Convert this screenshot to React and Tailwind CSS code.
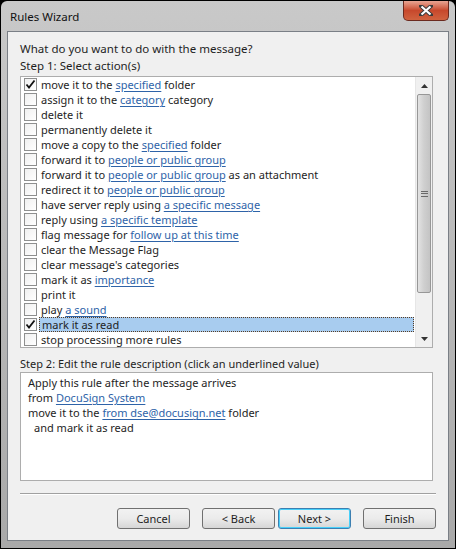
import React from "react";

const actions = [
  { checked: true, parts: ["move it to the ", { link: "specified" }, " folder"] },
  { parts: ["assign it to the ", { link: "category" }, " category"] },
  { parts: ["delete it"] },
  { parts: ["permanently delete it"] },
  { parts: ["move a copy to the ", { link: "specified" }, " folder"] },
  { parts: ["forward it to ", { link: "people or public group" }] },
  { parts: ["forward it to ", { link: "people or public group" }, " as an attachment"] },
  { parts: ["redirect it to ", { link: "people or public group" }] },
  { parts: ["have server reply using ", { link: "a specific message" }] },
  { parts: ["reply using ", { link: "a specific template" }] },
  { parts: ["flag message for ", { link: "follow up at this time" }] },
  { parts: ["clear the Message Flag"] },
  { parts: ["clear message's categories"] },
  { parts: ["mark it as ", { link: "importance" }] },
  { parts: ["print it"] },
  { parts: ["play ", { link: "a sound" }] },
  { checked: true, selected: true, parts: ["mark it as read"] },
  { parts: ["stop processing more rules"] },
];

function Link({ children }) {
  return <span className="text-[#2e63a8] underline underline-offset-[2px]">{children}</span>;
}

function Checkbox({ checked }) {
  return (
    <div className="w-[13px] h-[13px] shrink-0 border border-[#8e8f8f] bg-gradient-to-br from-[#f0f0f0] to-white flex items-center justify-center">
      {checked && (
        <svg width="11" height="11" viewBox="0 0 11 11">
          <path d="M1.5 5.5 L4 8.5 L9.5 1.5" fill="none" stroke="#111" strokeWidth="1.8" />
        </svg>
      )}
    </div>
  );
}

function Row({ item }) {
  return (
    <div className="h-[15px] flex items-center pl-[3px]">
      <Checkbox checked={item.checked} />
      <div
        className={`h-[15px] leading-[13px] ml-[2px] pl-[2px] whitespace-pre ${
          item.selected ? "flex-1 bg-[#a8ccef] border border-dotted border-[#5a3d22]" : "pt-px"
        }`}
      >
        {item.parts.map((p, i) =>
          typeof p === "string" ? <span key={i}>{p}</span> : <Link key={i}>{p.link}</Link>
        )}
      </div>
    </div>
  );
}

function Button({ children, focused }) {
  return (
    <button
      className={`w-[73px] h-[21px] rounded-[3px] border text-[11px] leading-[17px] text-[#1e1e1e] bg-gradient-to-b from-[#f2f2f2] via-[#ebebeb] to-[#d6d6d6] ${
        focused ? "border-[#3c7fb1] shadow-[inset_0_0_0_1px_#48d0fa]" : "border-[#707070]"
      }`}
    >
      {children}
    </button>
  );
}

export default function App() {
  return (
    <div
      className="w-[456px] h-[549px] bg-black p-px text-[11px] text-[#1e1e1e]"
      style={{ fontFamily: '"Segoe UI", "Noto Sans", sans-serif' }}
    >
      <div className="h-full flex flex-col rounded-t-[6px] bg-gradient-to-b from-[#c9c9c9] via-[#b8b8b8] to-[#a9a9a9] px-[6px] pb-[7px]">
        {/* Title bar */}
        <div className="h-[30px] flex items-start justify-between">
          <div className="pl-[3px] pt-[8px] leading-[16px] text-[11.5px] text-[#111]">Rules Wizard</div>
          <button className="w-[46px] h-[20px] rounded-b-[5px] border border-t-0 border-[#6b2a1f] bg-gradient-to-b from-[#e8a593] via-[#c7482c] to-[#d0623f] flex items-center justify-center">
            <svg width="14" height="11" viewBox="0 0 14 11">
              <path d="M2 1 L12 10 M12 1 L2 10" stroke="#3b3b3b" strokeWidth="4" strokeLinecap="square" />
              <path d="M2.5 1.5 L11.5 9.5 M11.5 1.5 L2.5 9.5" stroke="white" strokeWidth="2.2" />
            </svg>
          </button>
        </div>

        {/* Client area */}
        <div className="flex-1 bg-[#f0f0f0] border border-[#7a7f86] px-[12px] flex flex-col">
          <div className="mt-[9px] h-[15px] leading-[15px] text-[11.5px]">What do you want to do with the message?</div>
          <div className="mt-[2px] h-[15px] leading-[15px] text-[11.5px]">Step 1: Select action(s)</div>

          <div className="mt-[3px] w-[413px] h-[272px] border border-[#adadad] bg-white flex overflow-hidden">
            <div className="flex-1 flex flex-col pr-[1px]">
              {actions.map((a, i) => (
                <Row key={i} item={a} />
              ))}
            </div>
            {/* Scrollbar */}
            <div className="w-[17px] flex flex-col bg-[#f0f0f0] border-l border-[#e6e6e6]">
              <div className="h-[17px] flex items-center justify-center">
                <svg width="7" height="4" viewBox="0 0 7 4">
                  <path d="M0 4 L3.5 0 L7 4 Z" fill="#333" />
                </svg>
              </div>
              <div className="h-[199px] mx-px rounded-[2px] border border-[#979797] bg-gradient-to-r from-[#e3e3e3] via-[#cfcfcf] to-[#c4c4c4] flex items-center justify-center">
                <div className="w-[7px] h-[6px] border-y border-[#6a6a6a] flex items-center">
                  <div className="w-full h-px bg-[#6a6a6a]" />
                </div>
              </div>
              <div className="flex-1" />
              <div className="h-[17px] flex items-center justify-center">
                <svg width="7" height="4" viewBox="0 0 7 4">
                  <path d="M0 0 L7 0 L3.5 4 Z" fill="#333" />
                </svg>
              </div>
            </div>
          </div>

          <div className="mt-[8px] h-[15px] leading-[15px]">Step 2: Edit the rule description (click an underlined value)</div>

          <div className="mt-[1px] w-[413px] h-[109px] border border-[#adadad] bg-white pl-[7px] pt-[2px] leading-[15px] whitespace-pre">
            <div>Apply this rule after the message arrives</div>
            <div>
              from <Link>DocuSign System</Link>
            </div>
            <div>
              move it to the <Link>from dse@docusign.net</Link> folder
            </div>
            <div className="pl-[6px]">and mark it as read</div>
          </div>

          <div className="mt-[12px] w-[416px] h-[2px] border-t border-[#a0a0a0] border-b border-b-white" />

          <div className="mt-[13px] w-[416px] flex justify-end">
            <Button>Cancel</Button>
            <div className="ml-[12px]">
              <Button>&lt; Back</Button>
            </div>
            <div className="ml-[3px]">
              <Button focused>Next &gt;</Button>
            </div>
            <div className="ml-[12px]">
              <Button>Finish</Button>
            </div>
          </div>
        </div>
      </div>
    </div>
  );
}
